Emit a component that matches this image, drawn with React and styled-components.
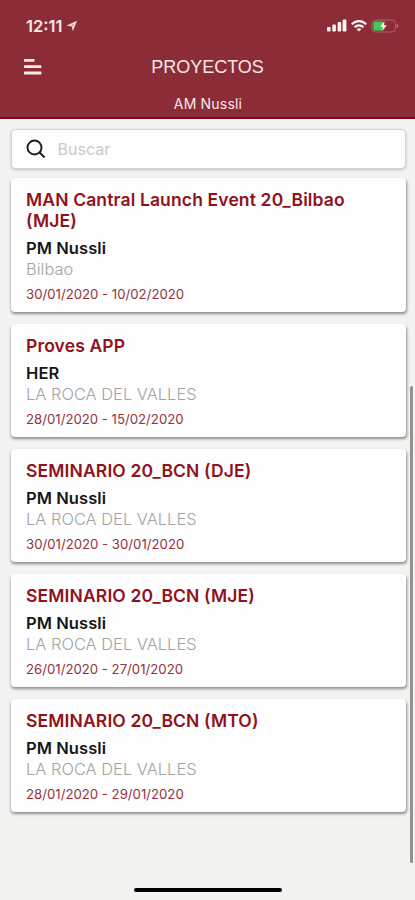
import React from "react";
import styled, { createGlobalStyle } from "styled-components";

const GlobalStyle = createGlobalStyle`
  * { box-sizing: border-box; }
  body { margin: 0; background: #f3f3f1; font-family: Inter, "Liberation Sans", sans-serif; }
`;

const Screen = styled.div`
  position: relative;
  display: flex;
  flex-direction: column;
  height: 900px;
  overflow: hidden;
  background: #f3f3f1;
`;

const Header = styled.header`
  height: 118.5px;
  background: #8c2c37;
  border-bottom: 2px solid #800a12;
  color: #f9e9e8;
`;

const StatusBar = styled.div`
  display: flex;
  align-items: center;
  justify-content: space-between;
  height: 51px;
  padding: 0 16px 0 26px;
`;

const Clock = styled.div`
  display: flex;
  align-items: center;
  gap: 4px;
  font-size: 16.5px;
  font-weight: 600;
  letter-spacing: 0;
`;

const StatusIcons = styled.div`
  display: flex;
  align-items: center;
  gap: 4px;
`;

const NavBar = styled.div`
  display: grid;
  grid-template-columns: 60px 1fr 60px;
  align-items: center;
  height: 31px;
`;

const MenuButton = styled.button`
  display: flex;
  padding: 0 0 0 24px;
  border: 0;
  background: none;
  color: inherit;
`;

const PageTitle = styled.h1`
  margin: 0;
  text-align: center;
  font: 400 18px/30px "Liberation Sans", sans-serif;
`;

const Subtitle = styled.div`
  margin-top: 12px;
  padding-left: 1px;
  text-align: center;
  font-size: 14px;
  line-height: 20px;
  letter-spacing: 0.2px;
`;

const Content = styled.main`
  display: flex;
  flex-direction: column;
  padding: 10.5px 9.5px 0 10.5px;
`;

const SearchBox = styled.label`
  display: flex;
  align-items: center;
  gap: 12px;
  height: 40px;
  padding-left: 14px;
  border: 1px solid #d6d6d8;
  border-radius: 5px;
  background: #fefefe;
  box-shadow: 0 1px 3px rgba(0, 0, 0, 0.22);
`;

const SearchInput = styled.input`
  flex: 1;
  min-width: 0;
  padding: 0;
  border: 0;
  outline: 0;
  background: transparent;
  font: 400 16px/20px Inter, sans-serif;
  &::placeholder { color: #c9c9cb; opacity: 1; }
`;

const ProjectList = styled.div`
  display: flex;
  flex-direction: column;
  gap: 12px;
  margin-top: 9px;
`;

const Card = styled.article`
  height: ${(p) => (p.$tall ? 134 : 113)}px;
  padding: 11px 50px 0 15.5px;
  border-radius: 4px;
  background: #fefefe;
  box-shadow: 0.5px 2px 3px rgba(0, 0, 0, 0.42);
`;

const ProjectName = styled.h2`
  margin: 0;
  color: #90121c;
  font-size: 17.5px;
  font-weight: 600;
  line-height: 21px;
  letter-spacing: 0.14px;
`;

const Manager = styled.div`
  margin-top: 7px;
  color: #161616;
  font-size: 16.5px;
  font-weight: 600;
  line-height: 21px;
  letter-spacing: 0.08px;
`;

const Place = styled.div`
  color: #a3a3a3;
  font-size: 16.4px;
  font-weight: 300;
  line-height: 21px;
  letter-spacing: 0.03px;
`;

const Dates = styled.div`
  margin-top: 4px;
  color: #92323e;
  font-size: 13.2px;
  line-height: 20px;
  letter-spacing: 0;
`;

const ScrollThumb = styled.div`
  position: absolute;
  top: 386px;
  right: 2px;
  width: 3px;
  height: 477px;
  border-radius: 2px;
  background: #92928f;
`;

const HomeIndicator = styled.div`
  position: absolute;
  bottom: 8px;
  left: 134px;
  width: 148px;
  height: 4px;
  border-radius: 2px;
  background: #000;
`;

const projects = [
  { name: "MAN Cantral Launch Event 20_Bilbao (MJE)", manager: "PM Nussli", place: "Bilbao", dates: "30/01/2020 - 10/02/2020", tall: true },
  { name: "Proves APP", manager: "HER", place: "LA ROCA DEL VALLES", dates: "28/01/2020 - 15/02/2020" },
  { name: "SEMINARIO 20_BCN (DJE)", manager: "PM Nussli", place: "LA ROCA DEL VALLES", dates: "30/01/2020 - 30/01/2020" },
  { name: "SEMINARIO 20_BCN (MJE)", manager: "PM Nussli", place: "LA ROCA DEL VALLES", dates: "26/01/2020 - 27/01/2020" },
  { name: "SEMINARIO 20_BCN (MTO)", manager: "PM Nussli", place: "LA ROCA DEL VALLES", dates: "28/01/2020 - 29/01/2020" },
];

const LocationIcon = () => (
  <svg width="12" height="12" viewBox="0 0 12 12">
    <path d="M.6 5.6 11 .8 6.8 11.2 5.8 6.4Z" fill="#f5dcdc" />
    <path d="M5.4 5.2 8 3.8 6.9 6.6Z" fill="#8c2c37" opacity=".5" />
  </svg>
);

const SignalIcon = () => (
  <svg width="20" height="13" viewBox="0 0 20 13" fill="#fff3f0">
    <rect x="0" y="8" width="3.6" height="4.6" rx="1" />
    <rect x="5.3" y="5.6" width="3.6" height="7" rx="1" />
    <rect x="10.6" y="3" width="3.6" height="9.6" rx="1" />
    <rect x="15.6" y=".4" width="3.8" height="12.2" rx="1" />
  </svg>
);

const WifiIcon = () => (
  <svg width="16" height="12" viewBox="0 0 16 12" fill="none" stroke="#fff3f0" strokeWidth="2.2">
    <path d="M.7 4.3Q8-2.2 15.3 4.3" />
    <path d="M3.5 7.2Q8 3.4 12.5 7.2" />
    <path d="M5.7 9.2Q8 7.4 10.3 9.2L8 11.6Z" fill="#fff3f0" stroke="none" />
  </svg>
);

const BatteryIcon = () => (
  <svg width="28" height="14" viewBox="0 0 28 14">
    <rect x="1" y="1" width="23.4" height="12" rx="3.4" fill="none" stroke="#ad6468" />
    <path d="M4 2.5H12V11.5H4Q2.5 11.5 2.5 10V4Q2.5 2.5 4 2.5Z" fill="#3dcc5a" />
    <path d="M25.7 4.8Q29 7 25.7 9.2Z" fill="#bd7779" />
    <path d="M13.5 2 9.4 7.8H12L11.2 12 15.8 6.2H13Z" fill="#fff5ee" />
  </svg>
);

const MenuIcon = () => (
  <svg width="18" height="16" viewBox="0 0 18 16" fill="#f9e9e8">
    <rect x="0" y="0" width="10.5" height="2.8" rx=".5" />
    <rect x="0" y="6.3" width="17.4" height="2.8" rx=".5" />
    <rect x="0" y="12.6" width="17.4" height="2.8" rx=".5" />
  </svg>
);

const SearchIcon = () => (
  <svg width="20" height="20" viewBox="0 0 20 20" fill="none" stroke="#1d1d1d" strokeWidth="1.9">
    <circle cx="8.5" cy="8.5" r="7" />
    <path d="m13.3 13.3 5.3 5.2" />
  </svg>
);

export default function App() {
  return (
    <Screen>
      <GlobalStyle />
      <Header>
        <StatusBar>
          <Clock>12:11 <LocationIcon /></Clock>
          <StatusIcons><SignalIcon /><WifiIcon /><BatteryIcon /></StatusIcons>
        </StatusBar>
        <NavBar>
          <MenuButton aria-label="Menú"><MenuIcon /></MenuButton>
          <PageTitle>PROYECTOS</PageTitle>
        </NavBar>
        <Subtitle>AM Nussli</Subtitle>
      </Header>
      <Content>
        <SearchBox>
          <SearchIcon />
          <SearchInput placeholder="Buscar" />
        </SearchBox>
        <ProjectList>
          {projects.map((p) => (
            <Card key={p.name} $tall={p.tall}>
              <ProjectName>{p.name}</ProjectName>
              <Manager>{p.manager}</Manager>
              <Place>{p.place}</Place>
              <Dates>{p.dates}</Dates>
            </Card>
          ))}
        </ProjectList>
      </Content>
      <ScrollThumb />
      <HomeIndicator />
    </Screen>
  );
}
